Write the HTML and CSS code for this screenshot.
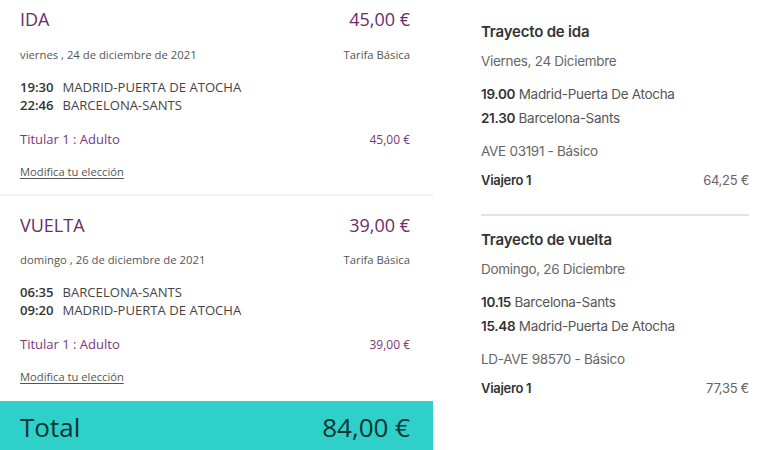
FILE: index.html
```html
<!DOCTYPE html>
<html lang="es">
<head>
<meta charset="utf-8">
<title>Resumen del viaje</title>
<link rel="stylesheet" href="styles.css">
</head>
<body>
<div class="page">
  <div class="left">
    <section class="leg leg-first">
      <div class="row head"><span>IDA</span><span>45,00 €</span></div>
      <div class="row date"><span>viernes , 24 de diciembre de 2021</span><span>Tarifa Básica</span></div>
      <div class="times">
        <div><b>19:30</b>MADRID-PUERTA DE ATOCHA</div>
        <div><b>22:46</b>BARCELONA-SANTS</div>
      </div>
      <div class="row pax"><span>Titular 1 : Adulto</span><span class="pax-price">45,00 €</span></div>
      <a class="modify" href="#">Modifica tu elección</a>
    </section>
    <section class="leg leg-second">
      <div class="row head"><span>VUELTA</span><span>39,00 €</span></div>
      <div class="row date"><span>domingo , 26 de diciembre de 2021</span><span>Tarifa Básica</span></div>
      <div class="times">
        <div><b>06:35</b>BARCELONA-SANTS</div>
        <div><b>09:20</b>MADRID-PUERTA DE ATOCHA</div>
      </div>
      <div class="row pax"><span>Titular 1 : Adulto</span><span class="pax-price">39,00 €</span></div>
      <a class="modify" href="#">Modifica tu elección</a>
    </section>
    <div class="total"><span>Total</span><span>84,00 €</span></div>
  </div>
  <div class="right">
    <section class="trip trip-first">
      <h2>Trayecto de ida</h2>
      <div class="tdate">Viernes, 24 Diciembre</div>
      <div class="ttimes">
        <div><b>19.00</b> Madrid-Puerta De Atocha</div>
        <div><b>21.30</b> Barcelona-Sants</div>
      </div>
      <div class="train">AVE 03191 - Básico</div>
      <div class="traveller"><b>Viajero 1</b><span>64,25 €</span></div>
    </section>
    <section class="trip trip-second">
      <h2>Trayecto de vuelta</h2>
      <div class="tdate">Domingo, 26 Diciembre</div>
      <div class="ttimes">
        <div><b>10.15</b> Barcelona-Sants</div>
        <div><b>15.48</b> Madrid-Puerta De Atocha</div>
      </div>
      <div class="train">LD-AVE 98570 - Básico</div>
      <div class="traveller"><b>Viajero 1</b><span>77,35 €</span></div>
    </section>
  </div>
</div>
</body>
</html>
```

FILE: styles.css
```css
* { box-sizing: border-box; }
html, body { margin: 0; padding: 0; background: #fff; }
body { width: 783px; height: 450px; overflow: hidden; }

.page {
  display: flex;
  gap: 48px;
  align-items: flex-start;
}

/* LEFT PANEL */
.left {
  width: 433px;
  font-family: "Open Sans", "Liberation Sans", sans-serif;
  color: #444;
}
.leg { padding: 0 23px 14px 20px; }
.leg-first { padding-top: 6px; padding-bottom: 13px; border-bottom: 2px solid #f1f1f1; }
.leg-first .date { margin-top: 15px; }
.leg-second { padding-top: 16px; padding-bottom: 15px; }

.row { display: flex; justify-content: space-between; align-items: baseline; }
.head {
  font-size: 18px;
  line-height: 26px;
  color: #6e2b6d;
}
.date {
  margin-top: 14px;
  font-size: 11.3px;
  line-height: 16px;
  color: #555;
}
.times {
  margin-top: 15px;
  font-size: 13.1px;
  line-height: 18px;
  color: #444;
}
.times b { font-weight: 600; color: #333; margin-right: 9px; }
.pax {
  margin-top: 16px;
  font-size: 13px;
  line-height: 18px;
  color: #7a3779;
}
.pax-price { font-size: 12px; color: #7a3779; }
.modify {
  display: inline-block;
  margin-top: 15px;
  font-size: 11.2px;
  line-height: 16px;
  color: #555;
  text-decoration: underline;
  text-underline-offset: 2px;
}

.total {
  display: flex;
  justify-content: space-between;
  align-items: center;
  background: #2ed0c9;
  color: #0e3432;
  font-size: 26px;
  line-height: 34px;
  padding: 8px 23px 10px 20px;
  height: 53px;
}

/* RIGHT PANEL */
.right {
  width: 268px;
  font-family: Inter, "Liberation Sans", sans-serif;
  color: #555;
  font-size: 13.5px;
  letter-spacing: -0.3px;
}
.trip h2 {
  margin: 0;
  font-size: 15px;
  line-height: 24px;
  font-weight: 600;
  letter-spacing: -0.2px;
  color: #333;
}
.trip-first { padding-top: 20px; padding-bottom: 22px; border-bottom: 2px solid #e3e3e3; }
.trip-second { padding-top: 12px; }
.tdate { margin-top: 5px; line-height: 24px; color: #666; }
.ttimes { margin-top: 10px; line-height: 23.5px; }
.ttimes b { font-weight: 600; color: #333; }
.train { margin-top: 9px; line-height: 24px; color: #666; }
.traveller {
  margin-top: 5px;
  display: flex;
  justify-content: space-between;
  font-size: 13px;
  line-height: 24px;
}
.traveller b { font-weight: 600; color: #333; }
.traveller span { color: #666; }
```
